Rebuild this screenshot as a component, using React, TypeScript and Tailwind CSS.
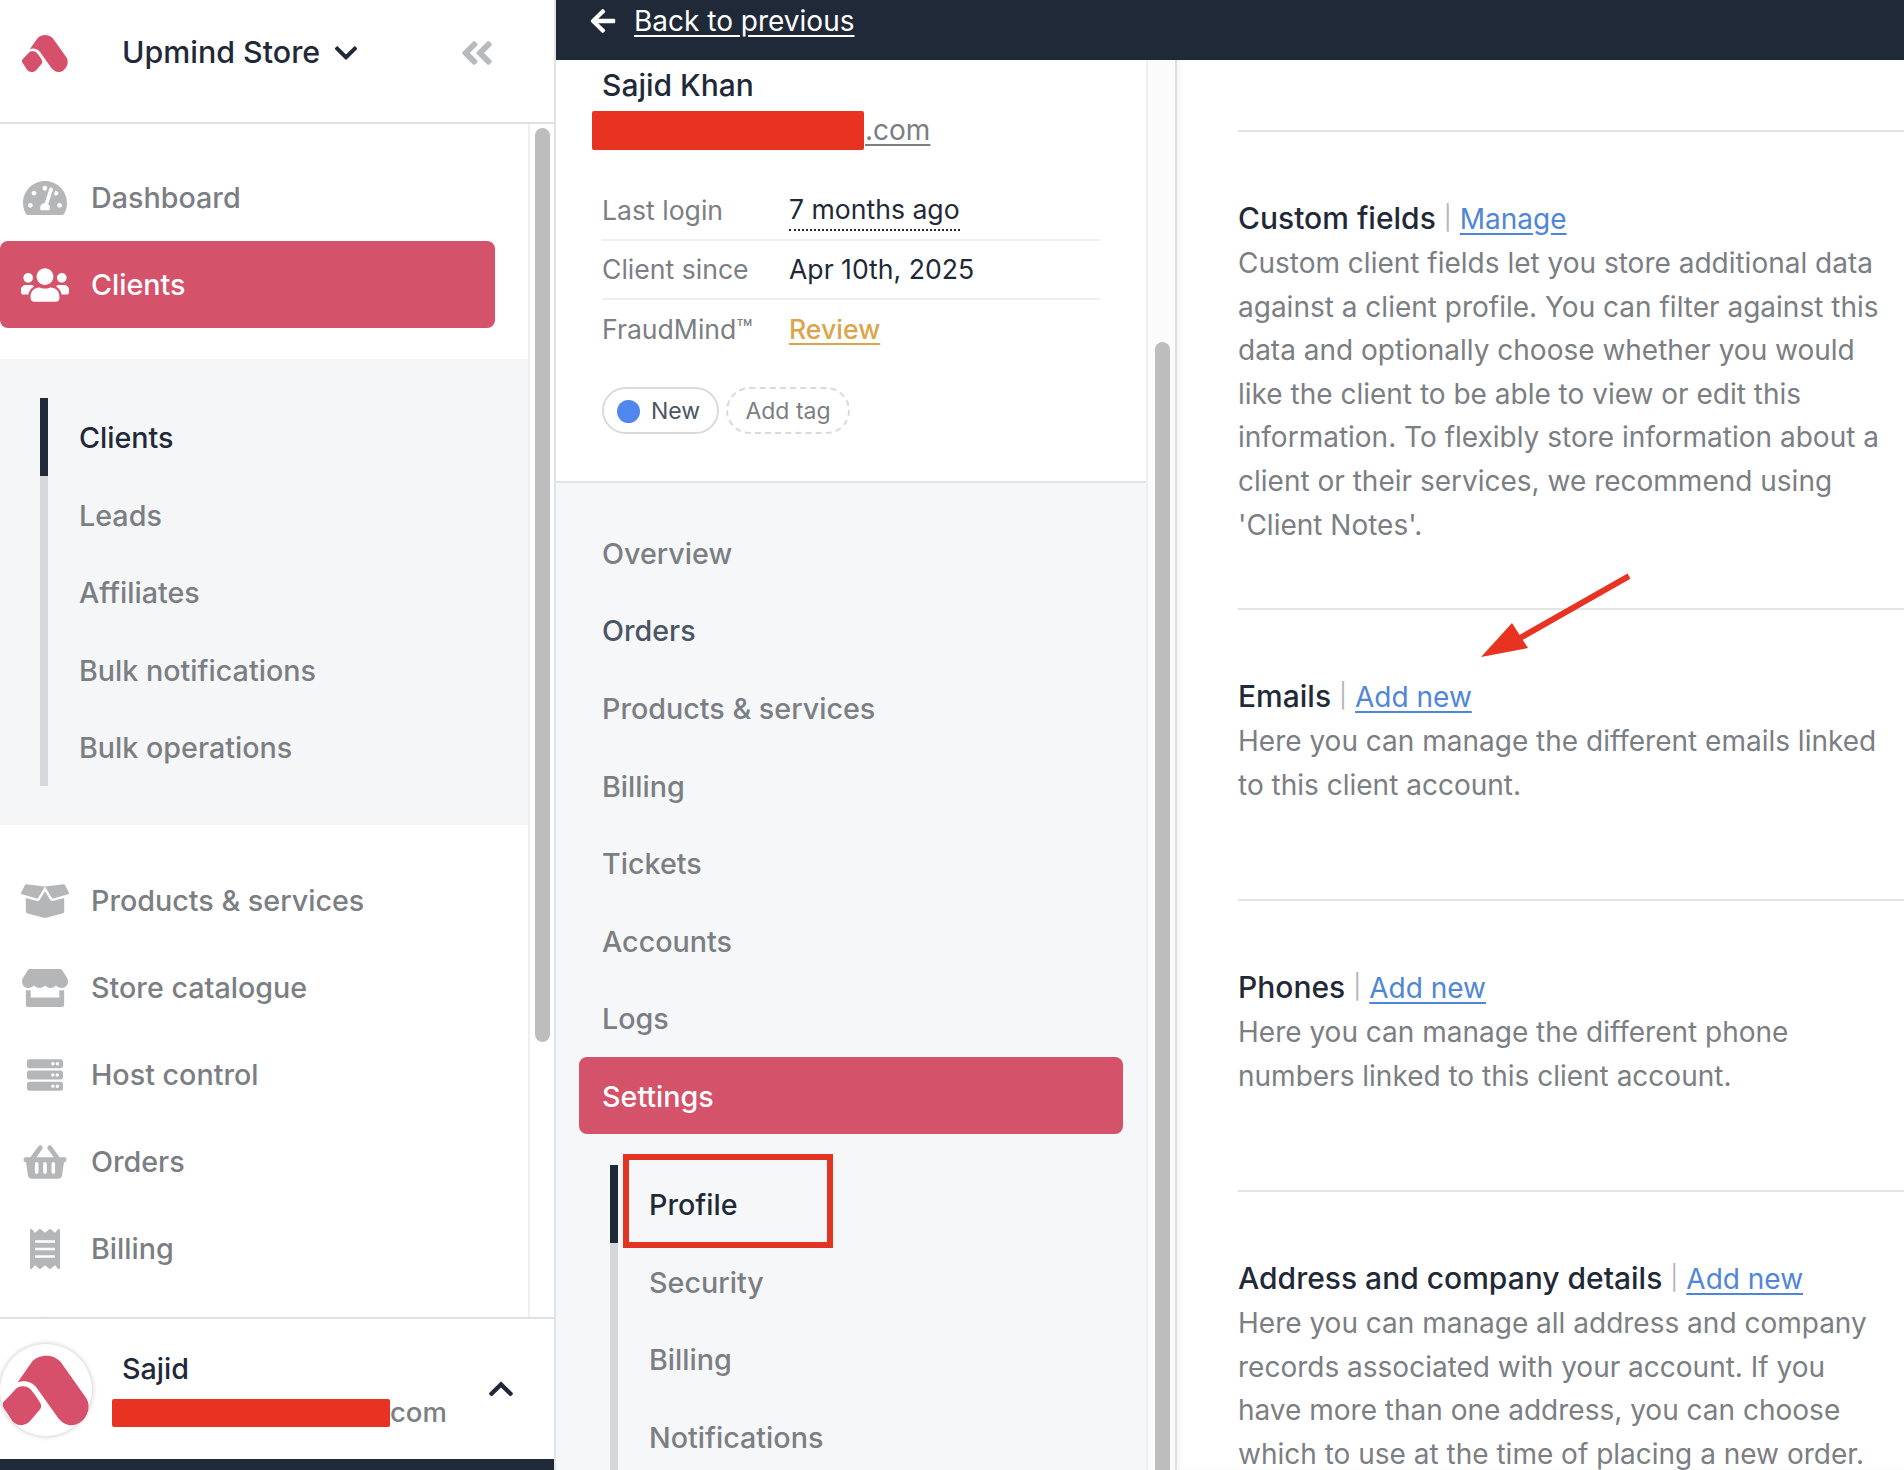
import {
  FaAngleDoubleLeft,
  FaArrowLeft,
  FaBoxOpen,
  FaChevronDown,
  FaChevronUp,
  FaGlobe,
  FaReceipt,
  FaServer,
  FaShoppingBasket,
  FaStore,
  FaTachometerAlt,
  FaUsers,
} from "react-icons/fa";
import type { ReactNode } from "react";

function Logo({ className }: { className: string }) {
  return (
    <svg viewBox="0 62 270 230" className={className} fill="#d6506b">
      <path d="M92 92 C108 72 150 62 178 90 L256 200 C270 222 262 255 238 272 C215 288 190 282 172 260 L108 170 C94 150 72 145 50 152 Z" />
      <path d="M45 172 C55 162 75 162 87 172 Q100 185 118 215 Q124 225 116 235 L88 268 C72 285 50 285 35 270 L12 235 C2 222 4 212 12 207 Z" />
    </svg>
  );
}

function SideItem({ icon, label, active }: { icon: ReactNode; label: string; active?: boolean }) {
  return (
    <div
      className={
        active
          ? "flex items-center h-[87px] bg-[#d4526a] text-white rounded-lg"
          : "flex items-center h-[87px] text-[#7b7e83]"
      }
    >
      <div className={active ? "w-[91px] flex justify-center pr-[2px] text-white" : "w-[91px] flex justify-center pr-[2px] text-[#b5b6b8]"}>
        {icon}
      </div>
      <span>{label}</span>
    </div>
  );
}

function SubItem({ label, active }: { label: string; active?: boolean }) {
  return (
    <div
      className={
        active
          ? "flex items-center h-[77.5px] border-l-8 border-[#1f2937] pl-[31px] pt-[2px] text-[#1f2937]"
          : "flex items-center h-[77.5px] border-l-8 border-[#d6d7da] pl-[31px] pt-[2px] text-[#7b7e83]"
      }
    >
      {label}
    </div>
  );
}

function Section({ title, link, children }: { title: string; link: string; children: ReactNode }) {
  return (
    <div className="border-t-2 border-[#e2e3e5] pt-[64px] pb-[61px] min-h-[291px] font-normal">
      <div className="h-[44px] flex items-center text-[#1f2937]">
        <span className="text-[30px] font-[450]">{title}</span>
        <span className="text-[#b5b6b8] mx-[8px] text-[24px]">|</span>
        <a className="text-[28px] text-[#4f86d8] underline underline-offset-4 mt-[1px]">{link}</a>
      </div>
      <p className="w-[646px] mt-[2px] text-[28px] leading-[43.6px] text-[#7b7e83]">{children}</p>
    </div>
  );
}

function ClientRow({ label, children, last }: { label: string; children: ReactNode; last?: boolean }) {
  return (
    <div className={last ? "flex items-center h-[59px] text-[26.6px] font-normal" : "flex items-center h-[59px] text-[26.6px] font-normal border-b-2 border-[#eeeff1]"}>
      <div className="w-[187px] text-[#7b7e83]">{label}</div>
      {children}
    </div>
  );
}

export default function App() {
  return (
    <div className="flex w-[1904px] h-[1470px] overflow-hidden bg-white text-[28.7px] font-[450] font-['Inter',sans-serif]">
      {/* main sidebar */}
      <div className="w-[556px] shrink-0 flex flex-col border-r-2 border-[#e2e3e5]">
        <div className="h-[124px] shrink-0 flex items-center border-b-2 border-[#dfe0e2] pb-[16px]">
          <Logo className="w-[48px] h-[41px] ml-[21px]" />
          <div className="ml-[53px] text-[30.4px] text-[#1f2937]">Upmind Store</div>
          <FaChevronDown className="ml-[13px] w-[26px] h-[26px] text-[#1f2937]" />
          <FaAngleDoubleLeft className="ml-[99px] w-[38px] h-[38px] text-[#b9babc]" />
        </div>
        <div className="flex-1 flex min-h-0">
          <div className="w-[528px] shrink-0 overflow-hidden pt-[30px]">
            <SideItem icon={<FaTachometerAlt className="w-[44px] h-[44px]" />} label="Dashboard" />
            <div className="w-[495px]">
              <SideItem icon={<FaUsers className="w-[48px] h-[48px]" />} label="Clients" active />
            </div>
            <div className="mt-[31px] bg-[#f5f6f8] py-[39px] pl-[40px]">
              <SubItem label="Clients" active />
              <SubItem label="Leads" />
              <SubItem label="Affiliates" />
              <SubItem label="Bulk notifications" />
              <SubItem label="Bulk operations" />
            </div>
            <div className="mt-[33px]">
              <SideItem icon={<FaBoxOpen className="w-[48px] h-[40px]" />} label="Products & services" />
              <SideItem icon={<FaStore className="w-[46px] h-[40px]" />} label="Store catalogue" />
              <SideItem icon={<FaServer className="w-[40px] h-[36px]" />} label="Host control" />
              <SideItem icon={<FaShoppingBasket className="w-[44px] h-[38px]" />} label="Orders" />
              <SideItem icon={<FaReceipt className="w-[32px] h-[40px]" />} label="Billing" />
              <div className="h-[87px] w-[91px] flex justify-center items-center pr-[2px] text-[#b5b6b8]">
                <FaGlobe className="w-[40px] h-[40px]" />
              </div>
            </div>
          </div>
          <div className="flex-1 border-l-2 border-[#eeeff1] pl-[5px] pt-[4px]">
            <div className="w-[15px] h-[914px] rounded-full bg-[#bdbdbd]" />
          </div>
        </div>
        <div className="h-[142px] shrink-0 flex items-center border-t-2 border-[#dfe0e2] bg-white">
          <div className="w-[92px] h-[92px] mt-[2px] shrink-0 rounded-full bg-white shadow-[0_0_5px_rgba(0,0,0,0.25)] flex items-center justify-center">
            <Logo className="w-[90px] h-[77px]" />
          </div>
          <div className="ml-[20px] w-[360px]">
            <div className="ml-[10px] h-[41px] flex items-center text-[#1f2937]">Sajid</div>
            <div className="flex items-center h-[34px] mt-[6px]">
              <div className="w-[278px] h-[28px] bg-[#e83323] rounded-[2px]" />
              <span className="text-[27.5px] text-[#7b7e83]">com</span>
            </div>
          </div>
          <FaChevronUp className="ml-[15px] w-[28px] h-[28px] text-[#1f2937]" />
        </div>
        <div className="h-[11px] shrink-0 bg-[#1f2937]" />
      </div>

      {/* client area */}
      <div className="flex-1 flex flex-col min-w-0">
        <div className="h-[60px] shrink-0 bg-[#1f2937] flex items-start pl-[33px] text-white text-[28px] font-normal">
          <FaArrowLeft className="w-[28px] h-[28px] mt-[7px]" />
          <a className="ml-[17px] underline underline-offset-4">Back to previous</a>
        </div>
        <div className="flex-1 flex min-h-0">
          <div className="w-[592px] shrink-0 border-r-2 border-[#eeeff1] bg-[#f6f7f9] overflow-hidden">
            <div className="bg-white border-b-2 border-[#e2e3e5] pb-[47px]">
              <div className="h-[50px] pl-[46px] flex items-center text-[30px] text-[#1f2937]">Sajid Khan</div>
              <div className="h-[39px] pl-[36px] flex items-center pt-[1px]">
                <div className="w-[272px] h-[39px] bg-[#e83323] rounded-[2px]" />
                <span className="ml-[1px] text-[28px] font-normal text-[#7b7e83] underline underline-offset-4">.com</span>
              </div>
              <div className="mt-[33px] ml-[46px] w-[498px]">
                <ClientRow label="Last login">
                  <span className="text-[#1f2937] border-b-2 border-dotted border-[#1f2937]">7 months ago</span>
                </ClientRow>
                <ClientRow label="Client since">
                  <span className="text-[#1f2937]">Apr 10th, 2025</span>
                </ClientRow>
                <ClientRow label="FraudMind™" last>
                  <a className="text-[#dca54c] font-[450] underline underline-offset-4">Review</a>
                </ClientRow>
              </div>
              <div className="mt-[28px] ml-[46px] flex gap-[7px] text-[23px] font-normal">
                <div className="h-[47px] w-[117px] rounded-full border-2 border-[#d9dadc] flex items-center pl-[13px] pt-[1px] text-[#4b5563]">
                  <span className="w-[23px] h-[23px] rounded-full bg-[#4f87ee]" />
                  <span className="ml-[11px]">New</span>
                </div>
                <div className="h-[47px] w-[124px] rounded-full border-2 border-dashed border-[#d9dadc] flex items-center justify-center pt-[1px] text-[#7b7e83]">
                  Add tag
                </div>
              </div>
            </div>
            <div className="pt-[31px]">
              {["Overview", "Orders", "Products & services", "Billing", "Tickets", "Accounts", "Logs"].map((n) => (
                <div key={n} className={n === "Orders" ? "h-[77.6px] pl-[46px] pt-[1px] flex items-center font-medium text-[#4b5563]" : "h-[77.6px] pl-[46px] pt-[1px] flex items-center text-[#7b7e83]"}>
                  {n}
                </div>
              ))}
              <div className="mx-[23px] h-[77px] rounded-lg bg-[#d4526a] text-white flex items-center pl-[23px] pt-[2px]">Settings</div>
              <div className="mt-[31px] ml-[54px]">
                <div className="relative">
                  <SubItem label="Profile" active />
                  <div className="absolute left-[13px] top-[-11px] w-[210px] h-[94px] border-[6px] border-[#e33322]" />
                </div>
                <SubItem label="Security" />
                <SubItem label="Billing" />
                <SubItem label="Notifications" />
                <SubItem label="" />
              </div>
            </div>
          </div>
          <div className="w-[29px] shrink-0 bg-[#fbfbfb] pl-[7px] pt-[282px] border-r-2 border-[#dedfe1]">
            <div className="w-[15px] h-full rounded-t-full bg-[#bdbdbd]" />
          </div>
          <div className="relative flex-1 pl-[61px] pt-[70px] overflow-hidden shadow-[inset_3px_0_4px_rgba(0,0,0,0.04)]">
            <Section title="Custom fields" link="Manage">
              Custom client fields let you store additional data against a client profile. You can filter against this
              data and optionally choose whether you would like the client to be able to view or edit this information.
              To flexibly store information about a client or their services, we recommend using 'Client Notes'.
            </Section>
            <Section title="Emails" link="Add new">
              Here you can manage the different emails linked to this client account.
            </Section>
            <Section title="Phones" link="Add new">
              Here you can manage the different phone numbers linked to this client account.
            </Section>
            <Section title="Address and company details" link="Add new">
              Here you can manage all address and company records associated with your account. If you have more than one
              address, you can choose which to use at the time of placing a new order.
            </Section>
            <svg viewBox="0 0 150 90" className="absolute left-[303px] top-[510px] w-[150px] h-[90px]">
              <path d="M149 6 L40 68" stroke="#e83323" strokeWidth="6" />
              <path d="M1 87 L32 53 L48 78 Z" fill="#e83323" />
            </svg>
          </div>
        </div>
      </div>
    </div>
  );
}
